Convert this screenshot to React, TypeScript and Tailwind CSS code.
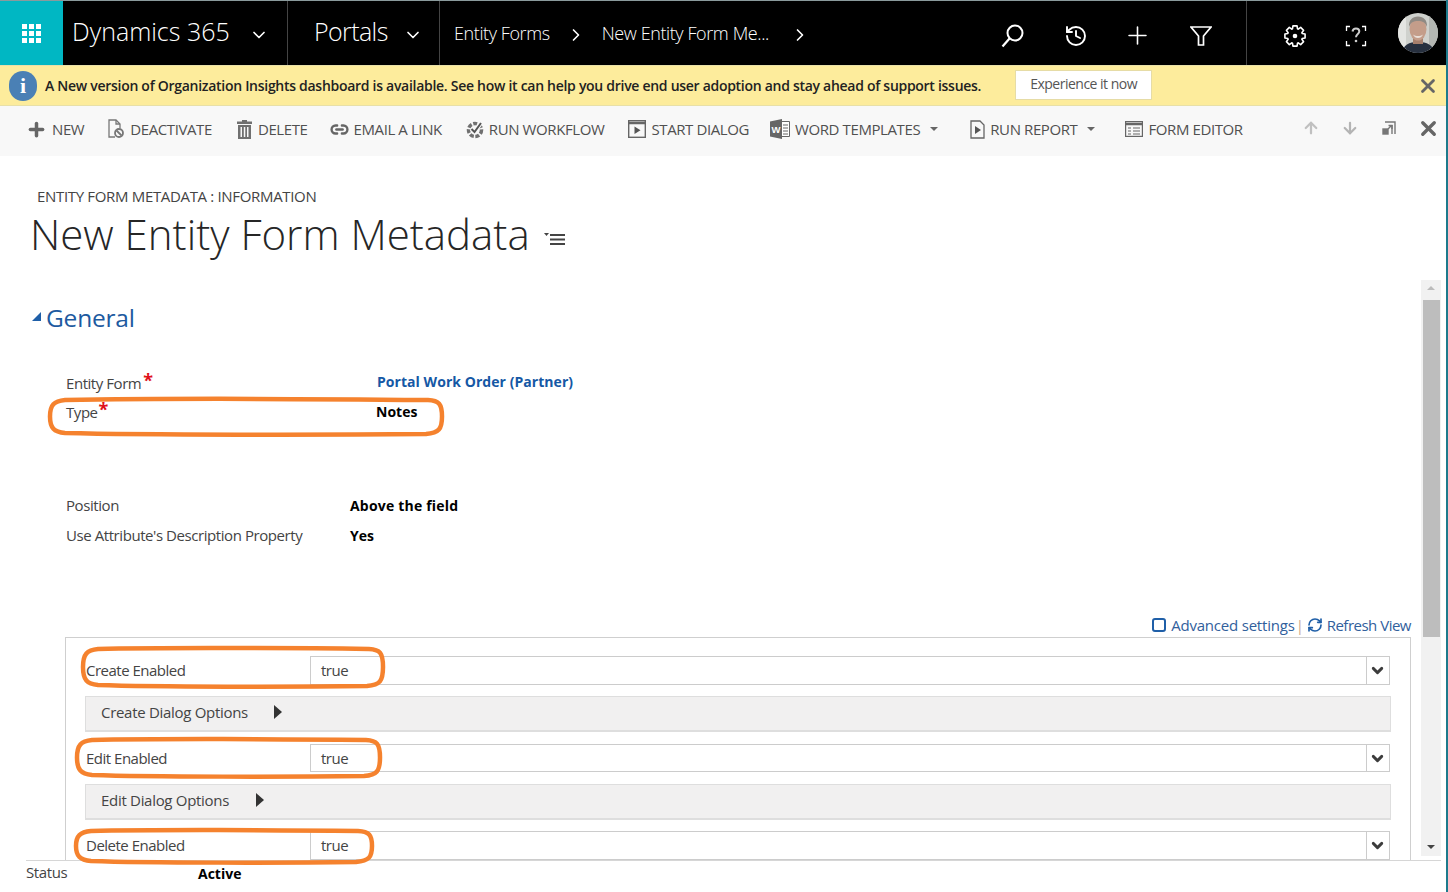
import { ChevronDown, ChevronRight, History, Plus, X, ArrowUp, ArrowDown, RefreshCw, Link2 } from 'lucide-react';
import type { ReactNode } from 'react';

function DocBan() {
  return (
    <svg width="18" height="20" viewBox="0 0 18 20" fill="none" stroke="#777" strokeWidth="1.3">
      <path d="M8 18H2V1h7l4 4v4" />
      <path d="M9 1v4h4" />
      <circle cx="12" cy="14" r="4" strokeWidth="1.8" />
      <path d="M9.500 11.500l5 5" strokeWidth="1.8" />
    </svg>
  );
}

function TrashSolid() {
  return (
    <svg width="17" height="19" viewBox="0 0 17 19" fill="#707070">
      <path d="M6 0h5v1.500h5V4H1V1.500h5z" />
      <path d="M2 5h13v14H2zM4.500 7v10h1.500V7zM7.800 7v10h1.500V7zM11 7v10h1.500V7z" fillRule="evenodd" />
    </svg>
  );
}

function Workflow() {
  return (
    <svg width="18" height="20" viewBox="0 0 18 20" fill="none">
      <circle cx="9" cy="11" r="6.500" stroke="#707070" strokeWidth="3.500" strokeDasharray="4 1.600" />
      <path d="M5.500 10l3 3L15 4" stroke="#f8f8f8" strokeWidth="4" />
      <path d="M5.500 10l3 3L15 4" stroke="#555" strokeWidth="2" />
    </svg>
  );
}

function PlayBox() {
  return (
    <svg width="18" height="18" viewBox="0 0 18 18" fill="none" stroke="#666" strokeWidth="1.400">
      <rect x=".7" y=".7" width="16.600" height="16.600" />
      <path d="M.7 3h16.600" strokeWidth="2.500" />
      <path d="M6.500 6.500v7.500l6-3.700z" fill="#555" stroke="none" />
    </svg>
  );
}

function WordIcon() {
  return (
    <svg width="20" height="20" viewBox="0 0 20 20">
      <path d="M11 2.500h8.500v15H11z" fill="#fff" stroke="#666" />
      <path d="M13 6h5M13 9h5M13 12h5M13 15h5" stroke="#666" />
      <path d="M0 2.500L12 0v20L0 17.500z" fill="#666" />
      <text x="1.500" y="13.500" fontSize="9.500" fontWeight="700" fill="#fff" fontFamily="Liberation Sans">W</text>
    </svg>
  );
}

function FilePlay() {
  return (
    <svg width="15" height="19" viewBox="0 0 15 19" fill="none" stroke="#666" strokeWidth="1.300">
      <path d="M1 1h9l4 4v13H1z" />
      <path d="M5 6v8l6-4z" fill="#555" stroke="none" />
    </svg>
  );
}

function FormIcon() {
  return (
    <svg width="18" height="16" viewBox="0 0 18 16" fill="none" stroke="#666" strokeWidth="1.200">
      <rect x=".6" y=".6" width="16.800" height="14.800" />
      <path d="M.6 3h16.800" strokeWidth="2.500" />
      <path d="M3 7h3M3 10h3M3 13h3M8 7h7M8 10h7M8 13h7" />
    </svg>
  );
}

function PopOut() {
  return (
    <svg width="16" height="16" viewBox="0 0 16 16" fill="none" stroke="#777" strokeWidth="1.400">
      <path d="M4 2h10v12" />
      <path d="M11 5v9" />
      <rect x="2" y="9" width="5" height="5" fill="#777" />
      <path d="M7 9l3-3M7.500 5.500H11V9" />
    </svg>
  );
}

function SearchGlass() {
  return (
    <svg width="23" height="24" viewBox="0 0 23 24" fill="none" stroke="#fff">
      <circle cx="14" cy="9" r="7.500" strokeWidth="2" />
      <path d="M8.500 14.500L1.500 22.500" strokeWidth="2.200" />
    </svg>
  );
}

function FunnelLine() {
  return (
    <svg width="22" height="20" viewBox="0 0 22 20" fill="none" stroke="#fff" strokeWidth="1.700">
      <path d="M1 1h20l-7.500 9v9h-5v-9z" />
    </svg>
  );
}

function Gear() {
  const pts: string[] = [];
  for (let i = 0; i < 8; i++) {
    const a = (i * Math.PI) / 4;
    for (const [r, o] of [[7.6, -0.34], [10.3, -0.2], [10.3, 0.2], [7.6, 0.34]]) {
      pts.push(`${(11 + r * Math.cos(a + o)).toFixed(2)},${(11 + r * Math.sin(a + o)).toFixed(2)}`);
    }
  }
  return (
    <svg width="22" height="22" viewBox="0 0 22 22" fill="none" stroke="#fff" strokeWidth="1.600" strokeLinejoin="round">
      <polygon points={pts.join(' ')} />
      <circle cx="11" cy="11" r="2.300" fill="#fff" stroke="none" />
    </svg>
  );
}

function HelpBracket() {
  return (
    <svg width="22" height="22" viewBox="0 0 22 22" fill="none" stroke="#fff" strokeWidth="1.300">
      <path d="M1.500 6V1.500H5M17 1.500h3.500V6M1.500 16v4.500H5M17 20.500h3.500V16" />
      <path d="M7.500 6.500c.3-2 1.800-3 3.500-3 1.800 0 3.300 1 3.300 2.800 0 2.600-3.300 2.800-3.300 6" strokeWidth="2" stroke="#ccc" />
      <circle cx="11" cy="16" r="1.300" fill="#ccc" stroke="none" />
    </svg>
  );
}

function Avatar() {
  return (
    <svg width="40" height="40" viewBox="0 0 40 40" className="rounded-full">
      <rect width="40" height="40" fill="#cfd1cd" />
      <rect width="8" height="40" fill="#e4e5e2" />
      <rect x="31" width="9" height="40" fill="#b3b6b2" />
      <path d="M4 40c1-8 7-11 16-11s15 3 17 11z" fill="#27303f" />
      <rect x="15" y="22" width="10" height="9" fill="#a67f6c" />
      <ellipse cx="20" cy="16" rx="8.500" ry="11.500" fill="#c49d8a" />
      <path d="M11 14c-.5-7 3.500-10.500 9-10.500S29.500 7 29 14c-1.500-4.500-4.500-6-9-6s-7.500 1.500-9 6z" fill="#8f8a84" />
      <path d="M15 21.500c3 2 7 2 10 0-1 2.500-3 3.500-5 3.500s-4-1-5-3.500z" fill="#eadfd8" />
    </svg>
  );
}

function Oval({ left, top, w, h }: { left: string; top: string; w: number; h: number }) {
  const r = w - 3;
  const b = h - 3;
  const m = h / 2;
  const d = `M18 4C${w * 0.25} 2.500 ${w * 0.7} 3 ${r - 14} 4C${r - 3} 4.500 ${r} 8 ${r} ${m}C${r} ${b - 5} ${r - 3} ${b - 1} ${r - 16} ${b}C${w * 0.7} ${b + 1} ${w * 0.25} ${b + 1} 18 ${b - 1}C7 ${b - 2} 3 ${b - 6} 3 ${m}C3 9 7 5 18 4Z`;
  return (
    <svg className={`absolute ${left} ${top}`} width={w} height={h} viewBox={`0 0 ${w} ${h}`} fill="none" stroke="#f5822e" strokeWidth="4.500">
      <path d={d} />
    </svg>
  );
}

function Cmd({ icon, label, caret, className }: { icon: ReactNode; label: string; caret?: boolean; className: string }) {
  return (
    <div className={`flex items-center shrink-0 -mt-[4px] ${className}`}>
      {icon}
      <span className="ml-[5px] text-[15px] text-[#505050] tracking-[-0.4px] whitespace-nowrap">{label}</span>
      {caret && <span className="ml-[10px] w-0 h-0 border-x-[4px] border-x-transparent border-t-[4px] border-t-[#666]" />}
    </div>
  );
}

function FieldRow({ label, className }: { label: string; className: string }) {
  return (
    <div className={`flex items-center ml-[20px] mr-[20px] ${className}`}>
      <span className="w-[224px] text-[15px] text-[#444] tracking-[-0.5px]">{label}</span>
      <div className="flex-1 h-full flex border border-[#ccc] bg-white">
        <span className="flex-1 pl-[10px] leading-[26px] text-[15px] text-[#444] tracking-[-0.5px]">true</span>
        <div className="w-[23px] border-l border-[#ccc] flex items-center justify-center">
          <ChevronDown size={17} strokeWidth={4} className="text-[#3c3c3c] -ml-[2px]" />
        </div>
      </div>
    </div>
  );
}

function DialogBar({ label, gap, className }: { label: string; gap: string; className: string }) {
  return (
    <div className={`flex items-center h-[36px] ml-[19px] mr-[19px] pl-[15px] bg-[#f1f0f0] border border-[#dedede] border-b-2 ${className}`}>
      <span className="text-[15px] text-[#444] tracking-[-0.3px] -mt-[2px]">{label}</span>
      <span className={`w-0 h-0 -mt-[3px] border-y-[7px] border-y-transparent border-l-[8px] border-l-[#333] ${gap}`} />
    </div>
  );
}

export default function App() {
  return (
    <div className="relative w-[1448px] h-[892px] overflow-hidden flex flex-col bg-white font-['Open_Sans','Noto_Sans',sans-serif] border-r-2 border-r-[#1d7a8c]">
      <header className="h-[65px] shrink-0 flex bg-black text-white border-t border-t-[#8a9a9c]">
        <div className="w-[63px] bg-[#00b7c3] flex items-center justify-center">
          <div className="grid grid-cols-3 gap-[2px]">
            {Array.from({ length: 9 }).map((_, i) => (
              <span key={i} className="w-[5px] h-[5px] bg-white" />
            ))}
          </div>
        </div>
        <div className="w-[225px] flex items-center pl-[9px] border-r border-r-[#444]">
          <span className="text-[25px] font-light tracking-[0px] -mt-[3px]">Dynamics 365</span>
          <ChevronDown size={20} className="ml-[19px] mt-[4px]" />
        </div>
        <div className="w-[152px] flex items-center pl-[26px] border-r border-r-[#444]">
          <span className="text-[25px] font-light tracking-[-0.6px] -mt-[3px]">Portals</span>
          <ChevronDown size={20} className="ml-[15px] mt-[4px]" />
        </div>
        <div className="flex items-center pl-[14px] text-[18px] font-light tracking-[-0.4px]">
          <span>Entity Forms</span>
          <ChevronRight size={20} className="ml-[16px] mt-[3px]" />
          <span className="ml-[16px]">New Entity Form Me...</span>
          <ChevronRight size={20} className="ml-[21px] mt-[3px]" />
        </div>
        <div className="flex-1 flex items-center justify-end mt-[5px]">
          <SearchGlass />
          <History size={24} strokeWidth={1.900} className="ml-[40px]" />
          <Plus size={29} strokeWidth={1.300} className="ml-[35px]" />
          <span className="ml-[38px]"><FunnelLine /></span>
        </div>
        <div className="w-[200px] ml-[34px] flex items-center border-l border-l-[#444]">
          <span className="ml-[37px] mt-[6px]"><Gear /></span>
          <span className="ml-[39px] mt-[5px]"><HelpBracket /></span>
          <span className="ml-[31px] -mt-[1px]"><Avatar /></span>
        </div>
      </header>

      <div className="h-[41px] shrink-0 flex items-center bg-[#fdec9c] border-y border-y-[#e8e0a8]">
        <div className="ml-[9px] w-[28px] h-[30px] rounded-full bg-[#4a80b5] flex items-center justify-center text-white text-[22px] font-bold font-['Liberation_Serif',serif]">i</div>
        <span className="ml-[8px] -mt-[1px] text-[14px] font-semibold text-[#222] tracking-[-0.285px] whitespace-nowrap">A New version of Organization Insights dashboard is available. See how it can help you drive end user adoption and stay ahead of support issues.</span>
        <div className="ml-[34px] w-[137px] h-[30px] bg-white border border-[#e6dca6] flex items-center justify-center text-[14px] text-[#555] tracking-[-0.5px] -mt-[1px] pb-[3px]">Experience it now</div>
        <X size={22} strokeWidth={3} className="ml-[265px] text-[#666]" />
      </div>

      <div className="h-[50px] shrink-0 flex items-center bg-[#f8f8f8] relative">
        <Cmd className="ml-[26px]" icon={<Plus size={21} strokeWidth={4} className="text-[#666]" />} label="NEW" />
        <Cmd className="ml-[23px]" icon={<DocBan />} label="DEACTIVATE" />
        <Cmd className="ml-[24px]" icon={<TrashSolid />} label="DELETE" />
        <Cmd className="ml-[22px]" icon={<Link2 size={19} strokeWidth={3} className="text-[#666]" />} label="EMAIL A LINK" />
        <Cmd className="ml-[24px]" icon={<Workflow />} label="RUN WORKFLOW" />
        <Cmd className="ml-[24px]" icon={<PlayBox />} label="START DIALOG" />
        <Cmd className="ml-[21px]" icon={<WordIcon />} label="WORD TEMPLATES" caret />
        <Cmd className="ml-[32px]" icon={<FilePlay />} label="RUN REPORT" caret />
        <Cmd className="ml-[30px]" icon={<FormIcon />} label="FORM EDITOR" />
        <div className="ml-auto flex items-center mr-[6px] -mt-[6px]">
          <ArrowUp size={18} strokeWidth={3} className="text-[#c0c0c0]" />
          <ArrowDown size={18} strokeWidth={3} className="ml-[21px] text-[#b4b4b4]" />
          <span className="ml-[22px]"><PopOut /></span>
          <X size={23} strokeWidth={3.500} className="ml-[20px] text-[#666]" />
        </div>
      </div>

      <main className="flex-1 min-h-0 flex overflow-hidden">
        <div className="flex-1 min-w-0 overflow-hidden">
          <div className="ml-[37px] mt-[30px] text-[15px] text-[#444] tracking-[-0.33px] leading-[20px]">ENTITY FORM METADATA : INFORMATION</div>
          <div className="ml-[30px] flex items-center h-[58px] -mt-[2px]">
            <h1 className="text-[42px] font-light text-[#262626] tracking-[0px] whitespace-nowrap">New Entity Form Metadata</h1>
            <svg width="22" height="14" viewBox="0 0 22 14" className="ml-[14px] mt-[11px]" fill="#444">
              <path d="M0 1h5l-2.500 3z" />
              <path d="M6 2h15v2H6zM6 6.500h15v2H6zM6 11h15v2H6z" />
            </svg>
          </div>
          <div className="ml-[32px] mt-[36px] flex items-center h-[40px]">
            <span className="w-0 h-0 -mt-[3px] border-b-[9px] border-b-[#1f5fa8] border-l-[9px] border-l-transparent" />
            <span className="ml-[5px] text-[24.500px] text-[#1d5aa0] tracking-[-0.2px]">General</span>
          </div>

          <div className="ml-[66px] mt-[30px] flex h-[30px] items-center">
            <span className="w-[311px] text-[15px] text-[#444] tracking-[-0.45px]">Entity Form<span className="text-[#e0101a] text-[18px] leading-[10px] font-bold ml-[2px] relative -top-[2px]">*</span></span>
            <span className="-mt-[4px] text-[14px] font-bold text-[#1558a5] tracking-[0.05px]">Portal Work Order (Partner)</span>
          </div>
          <div className="ml-[66px] flex h-[29px] items-center">
            <span className="w-[310px] text-[15px] text-[#444] tracking-[-0.45px]">Type<span className="text-[#e0101a] text-[18px] leading-[10px] font-bold ml-[1px] relative -top-[2px]">*</span></span>
            <span className="-mt-[2px] text-[14px] font-bold text-black">Notes</span>
          </div>

          <div className="ml-[66px] mt-[63px] flex h-[30px] items-center">
            <span className="w-[284px] text-[15px] text-[#444] tracking-[-0.43px]">Position</span>
            <span className="text-[14px] font-bold text-black tracking-[0.2px]">Above the field</span>
          </div>
          <div className="ml-[66px] flex h-[30px] items-center">
            <span className="w-[284px] text-[15px] text-[#444] tracking-[-0.43px] whitespace-nowrap">Use Attribute's Description Property</span>
            <span className="text-[14px] font-bold text-black">Yes</span>
          </div>

          <div className="mt-[63px] mr-[10px] h-[24px] flex items-center justify-end text-[15px] text-[#31609c] tracking-[-0.2px]">
            <span className="w-[14px] h-[14px] rounded-[3px] border-[2.500px] border-[#1f5fa8] mr-[5px]" />
            <span>Advanced settings</span>
            <span className="ml-[1px] mr-[3px] text-[#cba98c]">|</span>
            <RefreshCw size={16} strokeWidth={2.500} className="text-[#1f5fa8] mr-[4px]" />
            <span className="tracking-[-0.5px]">Refresh View</span>
          </div>
          <div className="ml-[65px] mr-[10px] border-x border-t border-[#cfcfcf] pt-[18px]">
            <FieldRow label="Create Enabled" className="h-[29px]" />
            <DialogBar label="Create Dialog Options" gap="ml-[26px]" className="mt-[11px]" />
            <FieldRow label="Edit Enabled" className="mt-[12px] h-[28px]" />
            <DialogBar label="Edit Dialog Options" gap="ml-[27px]" className="mt-[12px]" />
            <FieldRow label="Delete Enabled" className="mt-[11px] h-[29px]" />
          </div>
        </div>
        <div className="w-[20px] mr-[5px] mt-[124px] mb-[4px] bg-[#f1f1f1] flex flex-col items-center">
          <span className="mt-[6px] w-0 h-0 border-x-[4px] border-x-transparent border-b-[4px] border-b-[#bbb]" />
          <div className="mt-[10px] w-[17px] h-[337px] bg-[#bdbdbd]" />
          <span className="mt-auto mb-[7px] w-0 h-0 border-x-[4px] border-x-transparent border-t-[4px] border-t-[#444]" />
        </div>
      </main>

      <footer className="h-[32px] shrink-0 ml-[26px] mr-[5px] pb-[6px] border-t border-t-[#d6d6d6] bg-white flex items-center relative">
        <span className="w-[172px] text-[15px] text-[#444] -mt-[3px] tracking-[-0.4px]">Status</span>
        <span className="text-[14px] font-bold text-black">Active</span>
      </footer>

      <Oval left="left-[47px]" top="top-[396px]" w={398} h={41} />
      <Oval left="left-[80px]" top="top-[645px]" w={306} h={44} />
      <Oval left="left-[74px]" top="top-[736px]" w={309} h={43} />
      <Oval left="left-[73px]" top="top-[827px]" w={302} h={38} />
    </div>
  );
}
